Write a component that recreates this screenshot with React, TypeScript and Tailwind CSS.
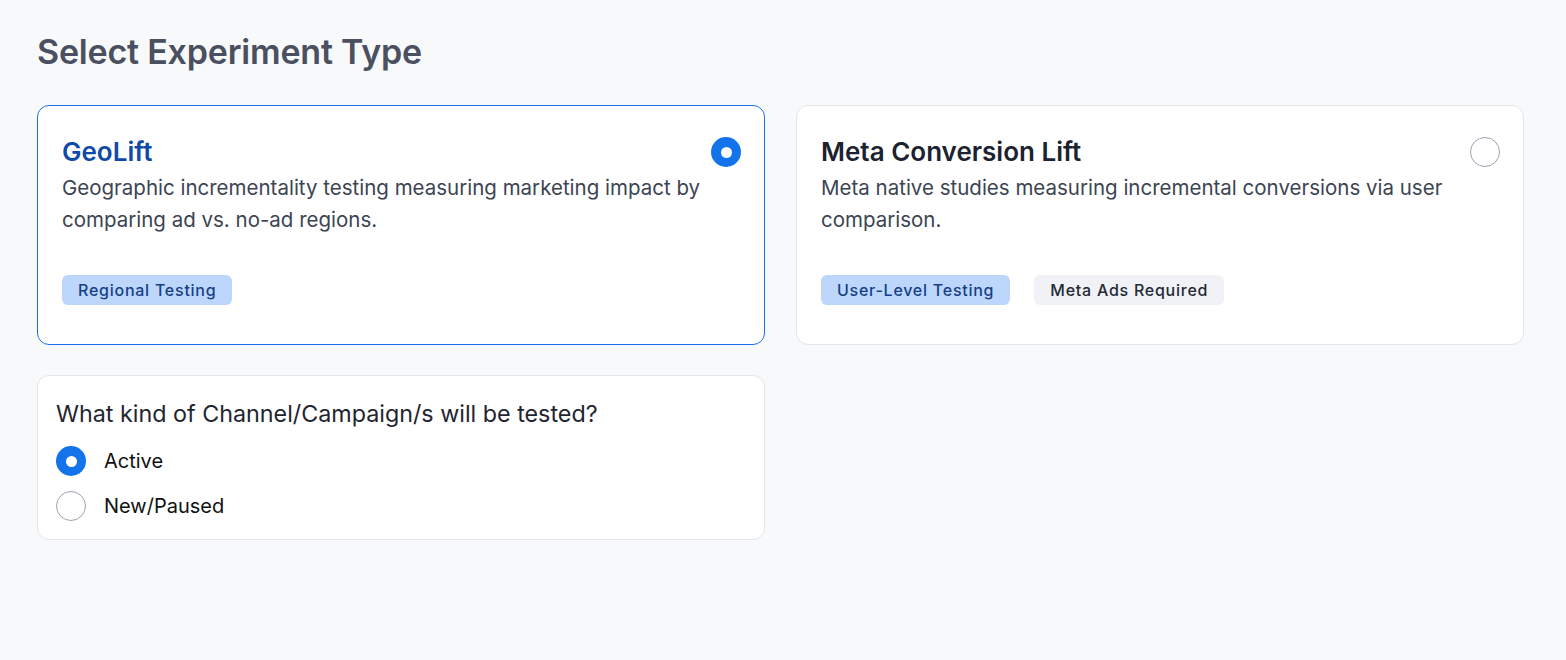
import { useState } from 'react'

type ExperimentType = {
  id: string
  title: string
  description: string
  tags: { label: string; tone: 'blue' | 'gray' }[]
}

const experimentTypes: ExperimentType[] = [
  {
    id: 'geolift',
    title: 'GeoLift',
    description: 'Geographic incrementality testing measuring marketing impact by comparing ad vs. no-ad regions.',
    tags: [{ label: 'Regional Testing', tone: 'blue' }],
  },
  {
    id: 'meta',
    title: 'Meta Conversion Lift',
    description: 'Meta native studies measuring incremental conversions via user comparison.',
    tags: [
      { label: 'User-Level Testing', tone: 'blue' },
      { label: 'Meta Ads Required', tone: 'gray' },
    ],
  },
]

function Radio({ checked }: { checked: boolean }) {
  return checked ? (
    <span className="w-[30px] h-[30px] rounded-full bg-[#1273eb] flex items-center justify-center shrink-0">
      <span className="block w-[11px] h-[11px] rounded-full bg-white" />
    </span>
  ) : (
    <span className="block w-[30px] h-[30px] rounded-full border border-[#9ca3af] bg-white shrink-0" />
  )
}

function TypeCard({ type, selected, onSelect }: { type: ExperimentType; selected: boolean; onSelect: () => void }) {
  return (
    <div
      onClick={onSelect}
      className={`bg-white rounded-xl border cursor-pointer pl-6 pr-[23px] pt-[30px] pb-[39px] ${
        selected ? 'border-[#1a6fe8]' : 'border-[#e3e5ea]'
      }`}
    >
      <div className="flex items-start justify-between gap-4">
        <h3 className={`text-[26px] leading-8 font-semibold ${selected ? 'text-[#0f4aa8]' : 'text-[#1b2230]'}`}>
          {type.title}
        </h3>
        <span className="mt-px flex">
          <Radio checked={selected} />
        </span>
      </div>
      <p className="mt-1 text-[20.5px] leading-8 text-[#3c4452] pr-8">{type.description}</p>
      <div className="flex items-center gap-6 mt-[39px]">
        {type.tags.map(tag => (
          <span
            key={tag.label}
            className={`h-[30px] px-4 rounded-md flex items-center text-[16px] font-medium tracking-[0.75px] ${
              tag.tone === 'blue' ? 'bg-[#bcd7fb] text-[#163f86]' : 'bg-[#f1f2f5] text-[#232a36]'
            }`}
          >
            {tag.label}
          </span>
        ))}
      </div>
    </div>
  )
}

export default function App() {
  const [selected, setSelected] = useState('geolift')
  const [channel, setChannel] = useState('active')

  return (
    <div
      className="min-h-[660px] bg-[#f8f9fb] pl-[37px] pr-[42px] pt-8"
      style={{ fontFamily: 'Inter, "Noto Sans", sans-serif' }}
    >
      <h1 className="text-[34px] leading-10 font-semibold text-[#4a5060] tracking-[-0.2px]">Select Experiment Type</h1>

      <div className="grid grid-cols-2 gap-x-[31px] gap-y-[30px] mt-[33px]">
        {experimentTypes.map(t => (
          <TypeCard key={t.id} type={t} selected={selected === t.id} onSelect={() => setSelected(t.id)} />
        ))}

        <div className="bg-white rounded-xl border border-[#e3e5ea] px-[18px] pt-[22px] pb-[18px]">
          <p className="text-[23.3px] leading-8 text-[#1f2530]">What kind of Channel/Campaign/s will be tested?</p>
          <div className="mt-4 flex flex-col gap-[15px]">
            {[
              { id: 'active', label: 'Active' },
              { id: 'new', label: 'New/Paused' },
            ].map(o => (
              <label key={o.id} className="flex items-center gap-[18px] cursor-pointer" onClick={() => setChannel(o.id)}>
                <Radio checked={channel === o.id} />
                <span className="text-[20px] text-[#111111]">{o.label}</span>
              </label>
            ))}
          </div>
        </div>
      </div>
    </div>
  )
}
